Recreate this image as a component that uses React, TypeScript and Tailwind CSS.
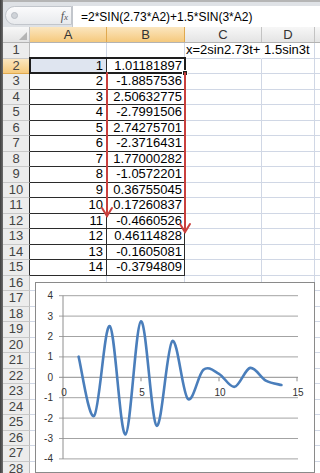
import React from 'react';

const values = [
    1.01181897, -1.8857536, 2.50632775, -2.7991506, 2.74275701, -2.3716431, 1.77000282,
    -1.0572201, 0.36755045, 0.17260837, -0.4660526, 0.46114828, -0.1605081, -0.3794809,
];

const labels = [
    '1.01181897', '-1.8857536', '2.50632775', '-2.7991506', '2.74275701', '-2.3716431', '1.77000282',
    '-1.0572201', '0.36755045', '0.17260837', '-0.4660526', '0.46114828', '-0.1605081', '-0.3794809',
];

const rows = Array.from({ length: 28 }, (_, i) => i + 1);

// chart scale (chart-local px)
const px = (t: number) => 27 + t * 15.6;
const py = (v: number) => 94.3 - v * 20.4;

function smoothPath(points: [number, number][]) {
    let d = `M${points[0][0]},${points[0][1]}`;
    for (let i = 0; i < points.length - 1; i++) {
        const p0 = points[i - 1] || points[i];
        const p1 = points[i];
        const p2 = points[i + 1];
        const p3 = points[i + 2] || p2;
        const c1x = p1[0] + (p2[0] - p0[0]) / 6;
        const c1y = p1[1] + (p2[1] - p0[1]) / 6;
        const c2x = p2[0] - (p3[0] - p1[0]) / 6;
        const c2y = p2[1] - (p3[1] - p1[1]) / 6;
        d += ` C${c1x},${c1y} ${c2x},${c2y} ${p2[0]},${p2[1]}`;
    }
    return d;
}

function Chart() {
    const pts = values.map((v, i) => [px(i + 1), py(v)] as [number, number]);
    const ticksY = [4, 3, 2, 1, 0, -1, -2, -3, -4];
    return (
        <div className="absolute left-[35px] top-[282px] w-[280px] h-[191px] bg-white border border-[#8a8a8a]">
            <svg width="278" height="189" className="block">
                {ticksY.map((k) => (
                    <g key={k}>
                        {k !== 0 && (
                            <line x1="23" x2="262" y1={py(k)} y2={py(k)} stroke="#a3a3a3" strokeWidth="1" />
                        )}
                        <text
                            x="17"
                            y={py(k) + 3.5}
                            textAnchor="end"
                            fontSize="10"
                            fill="#333"
                            fontFamily="'Liberation Sans', Arial, sans-serif"
                        >
                            {k}
                        </text>
                    </g>
                ))}
                <line x1="27" x2="27" y1={py(4)} y2={py(-4)} stroke="#8e8e8e" strokeWidth="1" />
                <line x1="23" x2="262" y1={py(0)} y2={py(0)} stroke="#8e8e8e" strokeWidth="1" />
                {[5, 10, 15].map((t) => (
                    <line key={t} x1={px(t)} x2={px(t)} y1={py(0)} y2={py(0) + 4} stroke="#8e8e8e" strokeWidth="1" />
                ))}
                {[0, 5, 10, 15].map((t) => (
                    <text
                        key={t}
                        x={px(t) + 1}
                        y="113"
                        textAnchor="middle"
                        fontSize="10"
                        fill="#333"
                        fontFamily="'Liberation Sans', Arial, sans-serif"
                    >
                        {t}
                    </text>
                ))}
                <path d={smoothPath(pts)} fill="none" stroke="#4a7ebb" strokeWidth="2.6" strokeLinecap="round" strokeLinejoin="round" />
            </svg>
        </div>
    );
}

function Arrows() {
    return (
        <svg className="absolute left-0 top-0 pointer-events-none" width="320" height="473">
            <g stroke="#c9403e" strokeWidth="2" fill="none" strokeLinecap="round">
                <line x1="107" y1="73" x2="107" y2="216" />
                <polyline points="102,208 107,216 112,208" />
                <line x1="185" y1="73" x2="185" y2="232" />
                <polyline points="180,224 185,232 190,224" />
            </g>
        </svg>
    );
}

export default function App() {
    const headerOrange = 'bg-linear-to-b from-[#fbe6bf] to-[#f5c97c] border-[#e0a94f]';
    const headerGray = 'bg-linear-to-b from-[#f7f7f7] to-[#e4e4e4] border-[#c3c3c3]';

    return (
        <div className="relative w-[320px] h-[473px] overflow-hidden bg-white flex font-['Liberation_Sans',Arial,sans-serif] text-black">
            <div className="w-[3px] h-full shrink-0 bg-linear-to-r from-[#3e3e3e] to-[#6e6e6e]" />
            <div className="flex-1 flex flex-col min-w-0">
                {/* formula bar */}
                <div className="h-[27px] shrink-0 flex flex-col bg-[#dfe2e6] border-t-2 border-[#b5b5b5]">
                    <div className="h-[4px]" />
                    <div className="flex-1 flex">
                        <div className="w-[67px] ml-[2px] mb-[2px] rounded-l-full border border-[#c2c6cc] bg-linear-to-b from-[#fbfbfc] to-[#e8eaed] flex items-center pl-[5px] pr-[3px]">
                            <div className="w-[7px] h-[7px] rounded-full bg-[#cfd3d8] border border-[#b7bcc3]" />
                            <span className="ml-auto font-['Liberation_Serif',serif] italic text-[12px] text-[#555] leading-none">
                                f<span className="text-[9px]">x</span>
                            </span>
                        </div>
                        <div className="flex-1 bg-white border-l border-[#c2c6cc] flex items-center pl-[8px] text-[12px] whitespace-nowrap">
                            =2*SIN(2.73*A2)+1.5*SIN(3*A2)
                        </div>
                    </div>
                </div>

                {/* column headers */}
                <div className="h-[16px] shrink-0 flex border-b border-[#b3b3b3] text-[13px] leading-[15px] text-[#333]">
                    <div className={`w-[27px] shrink-0 border-r ${headerGray} relative`}>
                        <svg className="absolute right-[2px] bottom-[2px]" width="8" height="8">
                            <polygon points="8,0 8,8 0,8" fill="#b4b4b4" />
                        </svg>
                    </div>
                    <div className={`w-[77px] shrink-0 border-r text-center ${headerOrange}`}>A</div>
                    <div className={`w-[78px] shrink-0 border-r text-center ${headerOrange}`}>B</div>
                    <div className={`w-[77px] shrink-0 border-r text-center ${headerGray}`}>C</div>
                    <div className={`w-[53px] shrink-0 border-r text-center ${headerGray}`}>D</div>
                    <div className={`flex-1 ${headerGray}`} />
                </div>

                {/* rows */}
                {rows.map((r) => {
                    const inTable = r >= 2 && r <= 15;
                    const v = labels[r - 2];
                    return (
                        <div key={r} className="h-[15.5px] shrink-0 flex text-[13px] leading-[14px]">
                            <div
                                className={`w-[27px] shrink-0 border-b text-center text-[#444] ${r === 2
                                    ? 'bg-linear-to-b from-[#fbe6bf] to-[#f5c97c] border-b-[#e0a94f]'
                                    : 'bg-[#ececec] border-b-[#c8c8c8]'
                                    } ${inTable ? 'border-r border-r-[#2b2b2b]' : 'border-r border-r-[#b9b9b9]'}`}
                            >
                                {r}
                            </div>
                            <div
                                className={`w-[77px] shrink-0 border-r border-b text-right pr-[3px] ${inTable || r === 1 ? 'border-b-[#2b2b2b]' : 'border-b-[#d0d7e5]'
                                    } ${inTable ? 'border-r-[#2b2b2b]' : 'border-r-[#d0d7e5]'} ${r === 2 ? 'bg-[#dfe5f0]' : ''}`}
                            >
                                {inTable ? r - 1 : ''}
                            </div>
                            <div
                                className={`w-[78px] shrink-0 border-r border-b text-right pr-[2px] ${inTable || r === 1 ? 'border-b-[#2b2b2b]' : 'border-b-[#d0d7e5]'
                                    } ${inTable ? 'border-r-[#2b2b2b]' : 'border-r-[#d0d7e5]'}`}
                            >
                                {inTable ? v : ''}
                            </div>
                            <div
                                className={`w-[77px] shrink-0 border-b border-b-[#d0d7e5] border-r relative ${r === 1 ? 'border-r-transparent' : 'border-r-[#d0d7e5]'
                                    }`}
                            >
                                {r === 1 && (
                                    <span className="absolute left-[1px] top-0 whitespace-nowrap">x=2sin2.73t+ 1.5sin3t</span>
                                )}
                            </div>
                            <div className="w-[53px] shrink-0 border-b border-r border-[#d0d7e5]" />
                            <div className="flex-1 border-b border-[#d0d7e5]" />
                        </div>
                    );
                })}
            </div>

            {/* selection A2:B2 */}
            <div className="absolute left-[29px] top-[57px] w-[157px] h-[17px] border-2 border-[#1e1e1e] pointer-events-none" />
            <div className="absolute left-[182px] top-[70px] w-[6px] h-[6px] bg-[#1e1e1e] border border-white" />

            <Arrows />
            <Chart />
        </div>
    );
}
